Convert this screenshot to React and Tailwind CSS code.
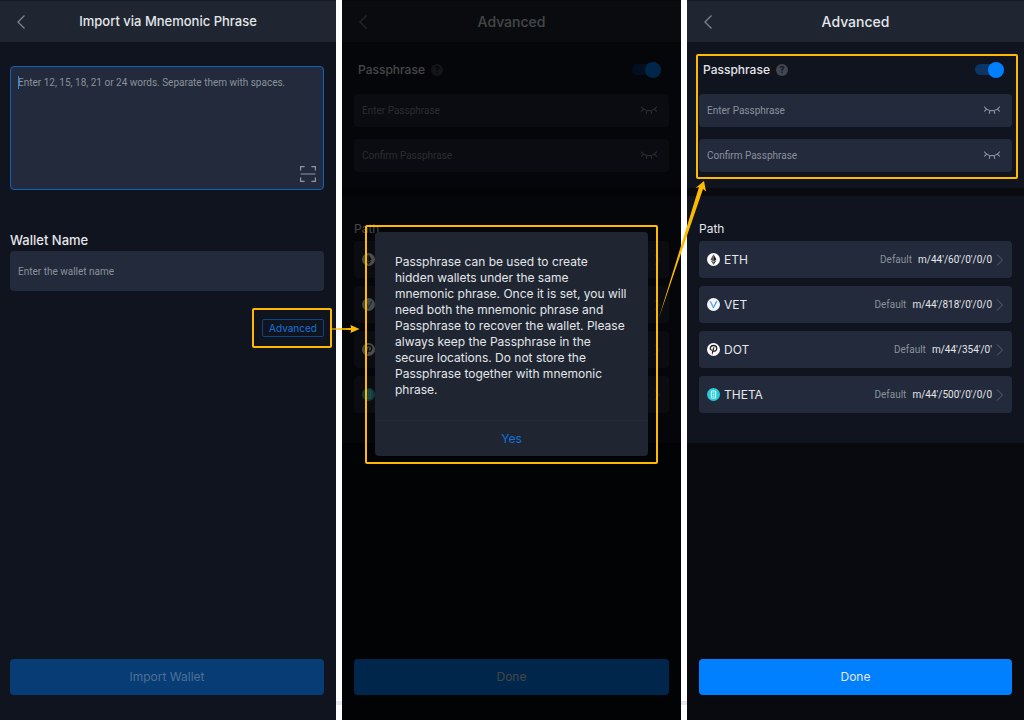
import { useId, useState } from "react";

const EthIcon = () => (
  <svg viewBox="0 0 24 24" className="size-[13px] shrink-0">
    <circle cx="12" cy="12" r="12" fill="#fff" />
    <path d="M12 2.500 6.500 12.200 12 15.500z" fill="#555" />
    <path d="M12 2.500l5.500 9.700L12 15.500z" fill="#1d1d1d" />
    <path d="M6.500 13.600 12 21.500v-4.700z" fill="#555" />
    <path d="M17.500 13.600 12 21.500v-4.700z" fill="#1d1d1d" />
  </svg>
);

const VetIcon = () => (
  <svg viewBox="0 0 24 24" className="size-[13px] shrink-0">
    <circle cx="12" cy="12" r="12" fill="#f4f7fd" />
    <path d="M4.500 6H7.500l5 9.500L11.500 19.500z" fill="#7fa4e0" />
    <path d="M19.500 6 12 19.500 10.500 16.500 12 15.500 16.500 6z" fill="#2f9fdb" />
  </svg>
);

const DotIcon = () => (
  <svg viewBox="0 0 24 24" className="size-[13px] shrink-0">
    <circle cx="12" cy="12" r="12" fill="#fff" />
    <path
      d="M8 13c-2-1.200-2.400-3.200-1.800-4.800C7 5.800 9.400 4.600 12 4.600c3.600 0 6 2.400 6 5.400s-2.400 5.200-5.400 5M12.400 9 10 17.500"
      fill="none"
      stroke="#1e1e1e"
      strokeWidth="2.400"
      strokeLinecap="round"
    />
    <circle cx="10" cy="19.800" r="1.200" fill="#e6007a" />
  </svg>
);

const ThetaIcon = () => (
  <svg viewBox="0 0 24 24" className="size-[13px] shrink-0">
    <circle cx="12" cy="12" r="12" fill="#2bcbd6" />
    <path
      d="M8 5.500h8v13H8zM10.500 9h3M10.500 12h3M10.500 15h3"
      fill="none"
      stroke="#d8fbfd"
      strokeWidth="1.800"
    />
  </svg>
);

const paths = [
  { name: "ETH", path: "m/44'/60'/0'/0/0", Icon: EthIcon },
  { name: "VET", path: "m/44'/818'/0'/0/0", Icon: VetIcon },
  { name: "DOT", path: "m/44'/354'/0'", Icon: DotIcon },
  { name: "THETA", path: "m/44'/500'/0'/0/0", Icon: ThetaIcon },
];

const Header = ({ title, className }) => (
  <header className="relative flex h-[42px] items-center justify-center border-t border-[#141a26] bg-[#1f2632]">
    <button aria-label="Back" className="absolute left-4 cursor-pointer">
      <svg viewBox="0 0 10 16" className="h-4 w-2.5 text-[#7d838e]" fill="none" stroke="currentColor" strokeWidth="1.300">
        <path d="M8.500 1.500 2 8l6.500 6.500" />
      </svg>
    </button>
    <h1 className={className}>{title}</h1>
  </header>
);

const ClosedEye = () => (
  <svg viewBox="0 0 18 9" className="h-[9px] w-[18px]" fill="none" stroke="#8b919c" strokeWidth="1.200" strokeLinecap="round">
    <path d="M1.500 1C3.500 3.600 6 4.600 9 4.600S14.500 3.600 16.500 1" />
    <path d="M3.600 3.200 1.600 5.200M7 4.500 6.300 7.300M11 4.500l.7 2.800M14.400 3.200l2 2" />
  </svg>
);

const PassphraseInput = ({ label }) => {
  const [visible, setVisible] = useState(false);

  return (
    <div className="flex h-[33px] items-center rounded bg-[#222a3b] px-2">
      <input
        type={visible ? "text" : "password"}
        aria-label={label}
        placeholder={label}
        className="min-w-0 flex-1 font-['Roboto',sans-serif] text-[10px] text-white outline-none placeholder:text-[#8b919c]"
      />
      <button
        aria-label={visible ? "Hide passphrase" : "Show passphrase"}
        onClick={() => setVisible(!visible)}
        className="mr-[3px] cursor-pointer"
      >
        <ClosedEye />
      </button>
    </div>
  );
};

const ImportScreen = () => {
  const id = useId();

  return (
    <main className="flex flex-col bg-[#10141f]">
      <Header title="Import via Mnemonic Phrase" className="text-[13px] font-medium" />

      <div className="flex flex-1 flex-col pt-6 pr-3 pb-[25px] pl-2.5">
        {/* Mnemonic */}
        <div className="relative flex">
          <textarea
            aria-label="Mnemonic phrase"
            placeholder="Enter 12, 15, 18, 21 or 24 words. Separate them with spaces."
            className="h-[124px] w-full resize-none rounded border border-[#0f62bb] bg-[#222a3b] px-[7px] py-2 font-['Roboto',sans-serif] text-[10px] leading-4 outline-none placeholder:text-[#8b919c]"
          />
          <span className="absolute top-2.5 left-2 h-[13px] w-px bg-[#1d8bff]" />
          <button aria-label="Scan QR code" className="absolute right-2 bottom-2 cursor-pointer">
            <svg viewBox="0 0 16 16" className="size-4" fill="none" stroke="#9096a1" strokeWidth="1.200">
              <path d="M.6 4.600v-4h4M11.400.6h4v4M15.400 11.400v4h-4M4.600 15.400h-4v-4M.6 8h14.800" />
            </svg>
          </button>
        </div>

        {/* Wallet name */}
        <label htmlFor={id} className="mt-[42px] text-[13px] leading-4 font-medium">
          Wallet Name
        </label>
        <input
          id={id}
          placeholder="Enter the wallet name"
          className="mt-[3px] h-10 rounded bg-[#222a3b] px-2 font-['Roboto',sans-serif] text-[10px] outline-none placeholder:text-[#8b919c]"
        />

        <div className="relative mt-7 self-end">
          <button className="block h-[18px] w-[62px] cursor-pointer rounded-xs border border-[#0f4683] text-[10px] leading-4 text-[#1173d8]">
            Advanced
          </button>
          <div className="pointer-events-none absolute -inset-y-[11px] -right-2 -left-2.5 rounded-xs border-2 border-[#ffba00]">
            <svg viewBox="0 0 30 10" className="absolute top-3.5 left-full h-2.5 w-[30px]" fill="#ffba00">
              <path d="M1 4.500 21 4 20.500 1 29.500 5 20.500 9 21 6 1 5.500z" />
            </svg>
          </div>
        </div>

        <button disabled className="mt-auto h-9 rounded bg-[#083c75] text-[12px] text-[#4d7095]">
          Import Wallet
        </button>
      </div>
    </main>
  );
};

const AdvancedScreen = ({ highlight, covered }) => {
  const [enabled, setEnabled] = useState(true);
  const id = useId();

  return (
    <div className="flex flex-1 flex-col bg-[#080a0f]">
      <Header title="Advanced" className="text-[14px] font-medium" />

      {/* Passphrase */}
      <section className="bg-[#10141f] px-3 pt-3 pb-[9px]">
        <div className="relative pt-[5px] pb-[7px]">
          <div className="mb-3.5 flex h-[21px] items-center pr-2 pl-1">
            <label htmlFor={id} className="text-[12px] font-medium">
              Passphrase
            </label>
            <button
              aria-label="About passphrase"
              className="ml-1.5 size-3 cursor-pointer rounded-full bg-[#42464f] text-[9px] leading-3 font-bold text-[#10141f]"
            >
              ?
            </button>
            <input
              id={id}
              type="checkbox"
              checked={enabled}
              onChange={() => setEnabled(!enabled)}
              className="ml-auto flex h-[11px] w-[29px] cursor-pointer appearance-none items-center rounded-full bg-[#3a404c] before:size-4 before:shrink-0 before:rounded-full before:bg-[#8b919c] checked:justify-end checked:bg-[#0a3564] checked:before:bg-[#0080ff]"
            />
          </div>
          <div className="flex flex-col gap-3">
            <PassphraseInput label="Enter Passphrase" />
            <PassphraseInput label="Confirm Passphrase" />
          </div>
          {highlight && (
            <div className="pointer-events-none absolute inset-y-0 -right-1.5 -left-[3px] rounded-xs border-2 border-[#ffba00]" />
          )}
        </div>
      </section>

      {/* Path */}
      <section className="mt-2 bg-[#10141f] px-3 pt-[25px] pb-[30px]">
        <h2 className="text-[12px] leading-4">Path</h2>
        <div className="mt-1 flex flex-col gap-2">
          {paths.map(({ name, path, Icon }) => (
            <button key={name} className="flex h-[37px] cursor-pointer items-center rounded bg-[#222a3b] px-2">
              <Icon />
              <span className={covered ? "invisible flex-1" : "flex flex-1 items-center"}>
                {!covered && (
                  <>
                    <span className="ml-1 text-[12px]">{name}</span>
                    <span className="ml-auto font-['Roboto',sans-serif] text-[10px] text-[#8b919c]">Default</span>
                    <span className="ml-1.5 font-['Roboto',sans-serif] text-[10px]">{path}</span>
                  </>
                )}
              </span>
              <svg viewBox="0 0 8 12" className="ml-1 h-3 w-2" fill="none" stroke="#5a606d">
                <path d="M1 .5 6.500 6 1 11.500" />
              </svg>
            </button>
          ))}
        </div>
      </section>

      <button className="mx-3 mt-auto mb-[25px] h-9 cursor-pointer rounded bg-[#0080ff] text-[12px]">
        Done
      </button>
    </div>
  );
};

const PassphraseDialog = () => (
  <div className="absolute inset-0 bg-black/70 px-[33px] pt-[232px]">
    <div className="relative">
      <div role="dialog" aria-label="Passphrase" className="rounded bg-[#1f2632]">
        <p className="px-5 py-[22px] text-[12px] leading-[16px]">
          Passphrase can be used to create hidden wallets under the same mnemonic phrase. Once it is set, you will
          need both the mnemonic phrase and Passphrase to recover the wallet. Please always keep the Passphrase in
          the secure locations. Do not store the Passphrase together with mnemonic phrase.
        </p>
        <button className="h-9 w-full cursor-pointer border-t border-[#222a38] text-[12px] text-[#1173d8]">
          Yes
        </button>
      </div>
      <div className="pointer-events-none absolute -inset-x-2.5 -top-[7px] -bottom-2 rounded-xs border-2 border-[#ffba00]">
        <svg viewBox="0 0 50 140" className="absolute bottom-[142px] left-full h-[140px] w-[50px]" fill="#ffba00">
          <path d="M2.500 139 43 7 39.500 8 48 1 50 11.500 47 9z" />
        </svg>
      </div>
    </div>
  </div>
);

const App = () => {
  return (
    <div className="relative grid min-h-screen grid-cols-[336fr_339fr_337fr] gap-x-1.5 bg-white pb-px font-['Inter',sans-serif] text-[#e4e6ea]">
      <div className="absolute inset-x-0 bottom-4 h-1 bg-[#e9e8f0]" />
      <div className="relative z-30 grid">
        <ImportScreen />
      </div>
      <div className="relative z-20 flex">
        <AdvancedScreen covered />
        <PassphraseDialog />
      </div>
      <div className="relative flex">
        <AdvancedScreen highlight />
      </div>
    </div>
  );
};

export default App;
